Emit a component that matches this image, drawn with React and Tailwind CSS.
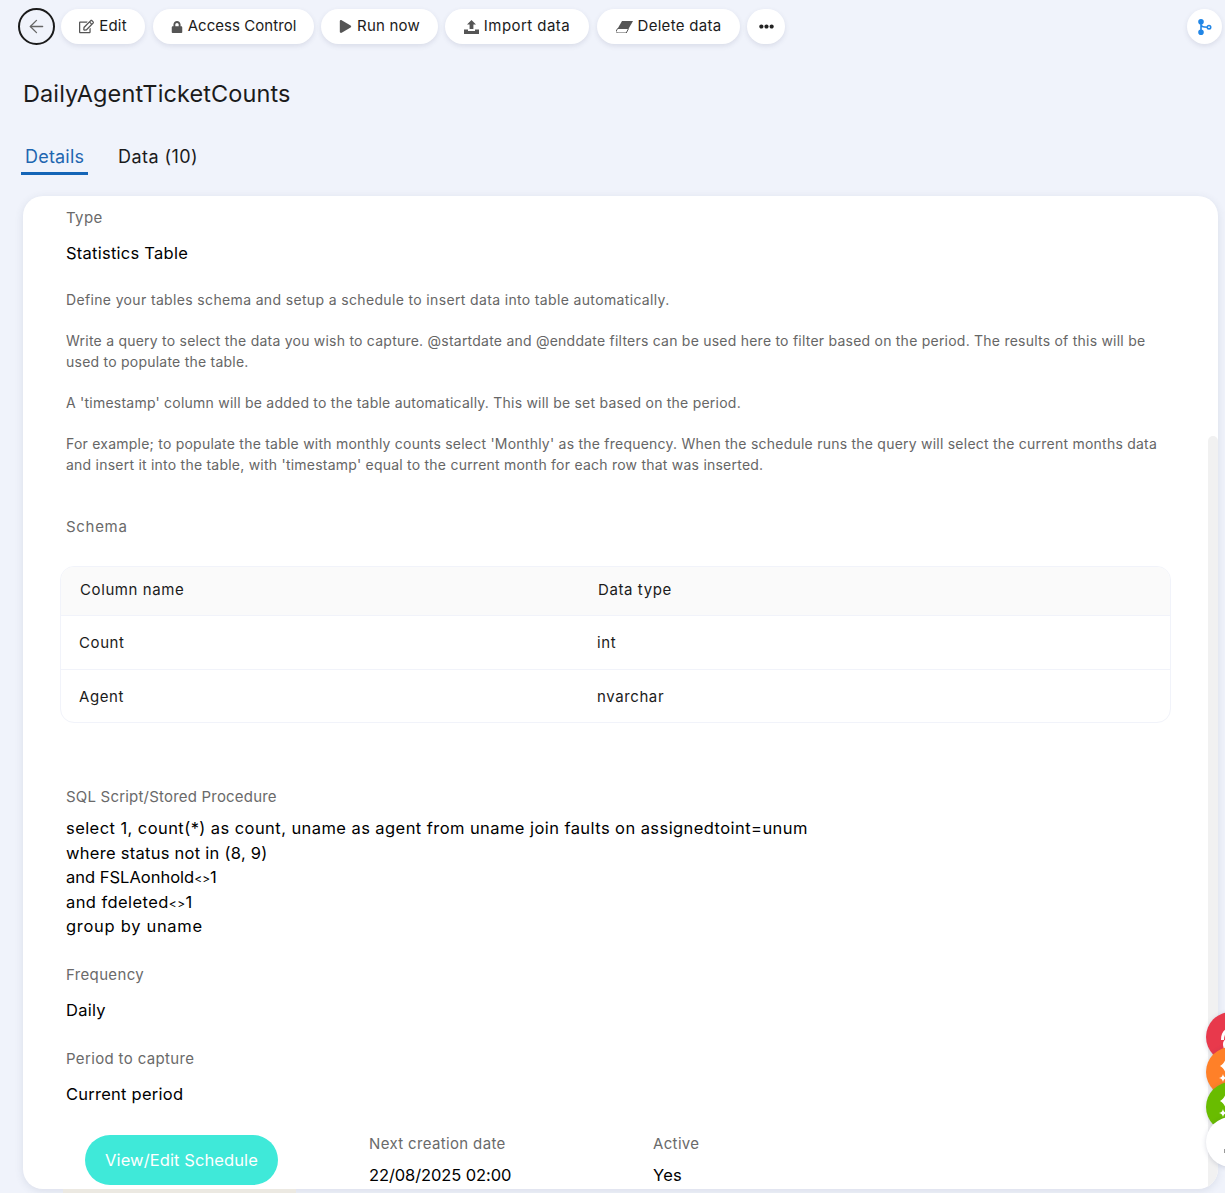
import React from 'react';
import { FaRegEdit, FaLock, FaPlay, FaEllipsisH } from 'react-icons/fa';
import { FiArrowLeft } from 'react-icons/fi';

const ToolButton = ({ icon, label, width }) => (
  <button className={`flex h-[35px] items-center justify-center gap-[5px] rounded-full bg-white text-[15px] text-[#1b1b1b] shadow-[0_2px_5px_rgba(60,70,110,0.13)] ${width}`}>
    <span className="text-[#555]">{icon}</span>
    {label}
  </button>
);

const ImportIcon = () => (
  <svg width="15" height="14" viewBox="0 0 15 14" fill="#555">
    <path d="M7.5 0 12 4.6H9.4V9H5.6V4.6H3z" />
    <path d="M0 9.5h4v1.6h7V9.5h4V14H0z" />
  </svg>
);

const EraserIcon = () => (
  <svg width="17" height="12" viewBox="0 0 17 12" fill="#555">
    <path d="M6 0h11l-4 7H2z" />
    <path d="M1.6 7.5h11L10.2 12H1.5L0 10.5z" fill="none" stroke="#555" strokeWidth="1" />
  </svg>
);

const BranchIcon = () => (
  <svg width="14" height="16" viewBox="0 0 14 16" fill="none" stroke="#2186e6" strokeWidth="1.6">
    <circle cx="3" cy="2.8" r="2" fill="#2186e6" />
    <circle cx="3" cy="13.2" r="2" fill="#2186e6" />
    <circle cx="11" cy="8.2" r="1.7" />
    <path d="M3 3v10M3 5.5c0 2 2 2.7 6.4 2.7" />
  </svg>
);

const Field = ({ label, value, className, gap = 'mt-[15px]', valueTracking = 'tracking-[0.25px]' }) => (
  <div className={className}>
    <div className="text-[15px] leading-5 tracking-[0.35px] text-[#6a6a6a]">{label}</div>
    <div className={`${gap} ${valueTracking} text-[16.5px] leading-5 text-black`}>{value}</div>
  </div>
);

const FloatButton = ({ color, top, children }) => (
  <div className={`absolute left-[1206px] flex h-[50px] w-[50px] items-center rounded-full ${color} ${top} shadow-[0_1px_5px_rgba(60,70,110,0.2)]`}>
    {children}
  </div>
);

const Sparkles = () => (
  <svg width="19" height="40" viewBox="0 0 19 40" fill="#fff" className="ml-[10px] shrink-0">
    <path d="M10 5c1 5 3 7 9 9-6 2-8 4-9 9-1-5-3-7-6-9 3-2 5-4 6-9z" />
    <path d="M7 22c.6 2.5 1.5 3.4 4 4-2.5.6-3.4 1.5-4 4-.6-2.5-1.5-3.4-4-4 2.5-.6 3.4-1.5 4-4z" />
  </svg>
);

export default function App() {
  return (
    <div className="relative h-[1193px] w-[1225px] overflow-hidden bg-[#f0f3fb] font-[Inter,sans-serif]">
      <div className="flex h-[52px] items-start pl-[18px] pr-[3px] pt-[8px]">
        <button className="flex h-[37px] w-[37px] items-center justify-center rounded-full border-2 border-[#1b1b1b] text-[#666]">
          <FiArrowLeft size={21} strokeWidth={1.5} />
        </button>
        <div className="ml-[6px] mt-px flex gap-[7px]">
          <ToolButton icon={<FaRegEdit size={15} />} label="Edit" width="w-[84px] tracking-[0.2px]" />
          <ToolButton icon={<FaLock size={12} />} label="Access Control" width="ml-px w-[161px] tracking-[0.05px]" />
          <ToolButton icon={<FaPlay size={13} />} label="Run now" width="w-[117px] tracking-[0.2px]" />
          <ToolButton icon={<ImportIcon />} label="Import data" width="w-[144px] tracking-[0.45px]" />
          <ToolButton icon={<EraserIcon />} label="Delete data" width="ml-px w-[143px] tracking-[0.3px]" />
          <button className="flex h-[35px] w-[38px] items-center justify-center rounded-full bg-white text-[#222] shadow-[0_2px_5px_rgba(60,70,110,0.13)]">
            <FaEllipsisH size={15} />
          </button>
        </div>
        <button className="ml-auto mt-px flex h-[35px] w-[35px] items-center justify-center rounded-full bg-white shadow-[0_2px_5px_rgba(60,70,110,0.13)]">
          <BranchIcon />
        </button>
      </div>

      <h1 className="ml-[23px] mt-[26px] text-[23.5px] leading-8 font-normal tracking-[0.1px] text-[#1b1b1b]">DailyAgentTicketCounts</h1>

      <div className="ml-[21px] mt-[35px] flex h-[30px] items-start text-[18px] leading-6 tracking-[0.2px]">
        <div className="h-[30px] w-[67px] border-b-[3px] border-[#1565b7] pl-[4px] text-[#1f66b0]">Details</div>
        <div className="ml-[30px] tracking-[0.45px] text-[#1b1b1b]">Data (10)</div>
      </div>

      <div className="relative ml-[23px] mt-[21px] h-[993px] w-[1195px] overflow-hidden rounded-[20px] bg-white pl-[43px] shadow-[0_2px_8px_rgba(60,70,110,0.12)]">
        <div className="absolute right-0 top-[240px] bottom-0 w-[10px] rounded-t-[5px] bg-[#f1f1f1]" />

        <Field label="Type" value="Statistics Table" className="mt-[12px]" />

        <p className="mt-[27px] text-[14px] leading-[20.6px] tracking-[0.23px] text-[#666]">
          <span className="tracking-[0.35px]">Define your tables schema and setup a schedule to insert data into table automatically.</span>
          <br /><br />
          Write a query to select the data you wish to capture. @startdate and @enddate filters can be used here to filter based on the period. The results of this will be
          <br />
          used to populate the table.
          <br /><br />
          A 'timestamp' column will be added to the table automatically. This will be set based on the period.
          <br /><br />
          For example; to populate the table with monthly counts select 'Monthly' as the frequency. When the schedule runs the query will select the current months data
          <br />
          and insert it into the table, with 'timestamp' equal to the current month for each row that was inserted.
        </p>

        <div className="mt-[42px] text-[15px] leading-5 tracking-[0.7px] text-[#6a6a6a]">Schema</div>

        <div className="-ml-[6px] mt-[29px] w-[1111px] overflow-hidden rounded-[14px] border border-[#f1f3fa] text-[15px] tracking-[0.6px] text-[#1b1b1b]">
          <div className="flex h-[49px] items-center border-b border-[#f1f3fa] bg-[#fafafa] pb-[2px] pl-[19px]">
            <div className="w-[518px]">Column name</div>
            <div>Data type</div>
          </div>
          <div className="flex h-[54px] items-center border-b border-[#f1f3fa] pl-[18px]">
            <div className="w-[518px]">Count</div>
            <div>int</div>
          </div>
          <div className="flex h-[52px] items-center pl-[18px] pt-[2px]">
            <div className="w-[518px]">Agent</div>
            <div>nvarchar</div>
          </div>
        </div>

        <div className="mt-[64px] text-[15px] leading-5 tracking-[0.2px] text-[#6a6a6a]">SQL Script/Stored Procedure</div>
        <div className="mt-[9px] text-[16.5px] leading-[24.4px] tracking-[0.43px] text-black">
          <div>select 1, count(*) as count, uname as agent from uname join faults on assignedtoint=unum</div>
          <div className="tracking-[0.27px]">where status not in (8, 9)</div>
          <div className="tracking-[0px]">and FSLAonhold<span className="text-[12px] leading-none">&lt;&gt;</span>1</div>
          <div>and fdeleted<span className="text-[12px] leading-none">&lt;&gt;</span>1</div>
          <div className="tracking-[0.7px]">group by uname</div>
        </div>

        <Field label="Frequency" value="Daily" className="mt-[27px]" />
        <Field label="Period to capture" value="Current period" className="mt-[29px]" />

        <div className="mt-[31px] flex items-start">
          <button className="ml-[19px] h-[50px] w-[193px] rounded-full bg-[#3fe9d9] text-[16.5px] tracking-[0.1px] text-white">View/Edit Schedule</button>
          <Field label="Next creation date" value="22/08/2025 02:00" className="ml-[91px] mt-[-1px] w-[284px]" gap="mt-[11px]" valueTracking="tracking-[-0.1px]" />
          <Field label="Active" value="Yes" className="mt-[-1px]" gap="mt-[11px]" />
        </div>
      </div>

      <div className="absolute bottom-0 left-[63px] h-[4px] w-[233px] bg-[#ece9e2]" />

      <FloatButton color="bg-[#e8394c]" top="top-[1012px]">
        <svg width="19" height="30" viewBox="0 0 19 30" fill="#fff" className="ml-[12px] shrink-0">
          <path d="M3 18C3 10 7 6 13 6h6v2h-5c-4 0-8 3-8 10z" />
          <path d="M5 22c0-4 4-6 8-6h6v14H10c-3 0-5-4-5-8z" />
        </svg>
      </FloatButton>
      <FloatButton color="bg-[#ff8028]" top="top-[1047px]"><Sparkles /></FloatButton>
      <FloatButton color="bg-[#69bc00]" top="top-[1082px]"><Sparkles /></FloatButton>
      <FloatButton color="bg-white" top="top-[1117px]">
        <div className="ml-[18px] mt-[18px] h-[4px] w-[3px] bg-[#999]" />
      </FloatButton>
    </div>
  );
}
